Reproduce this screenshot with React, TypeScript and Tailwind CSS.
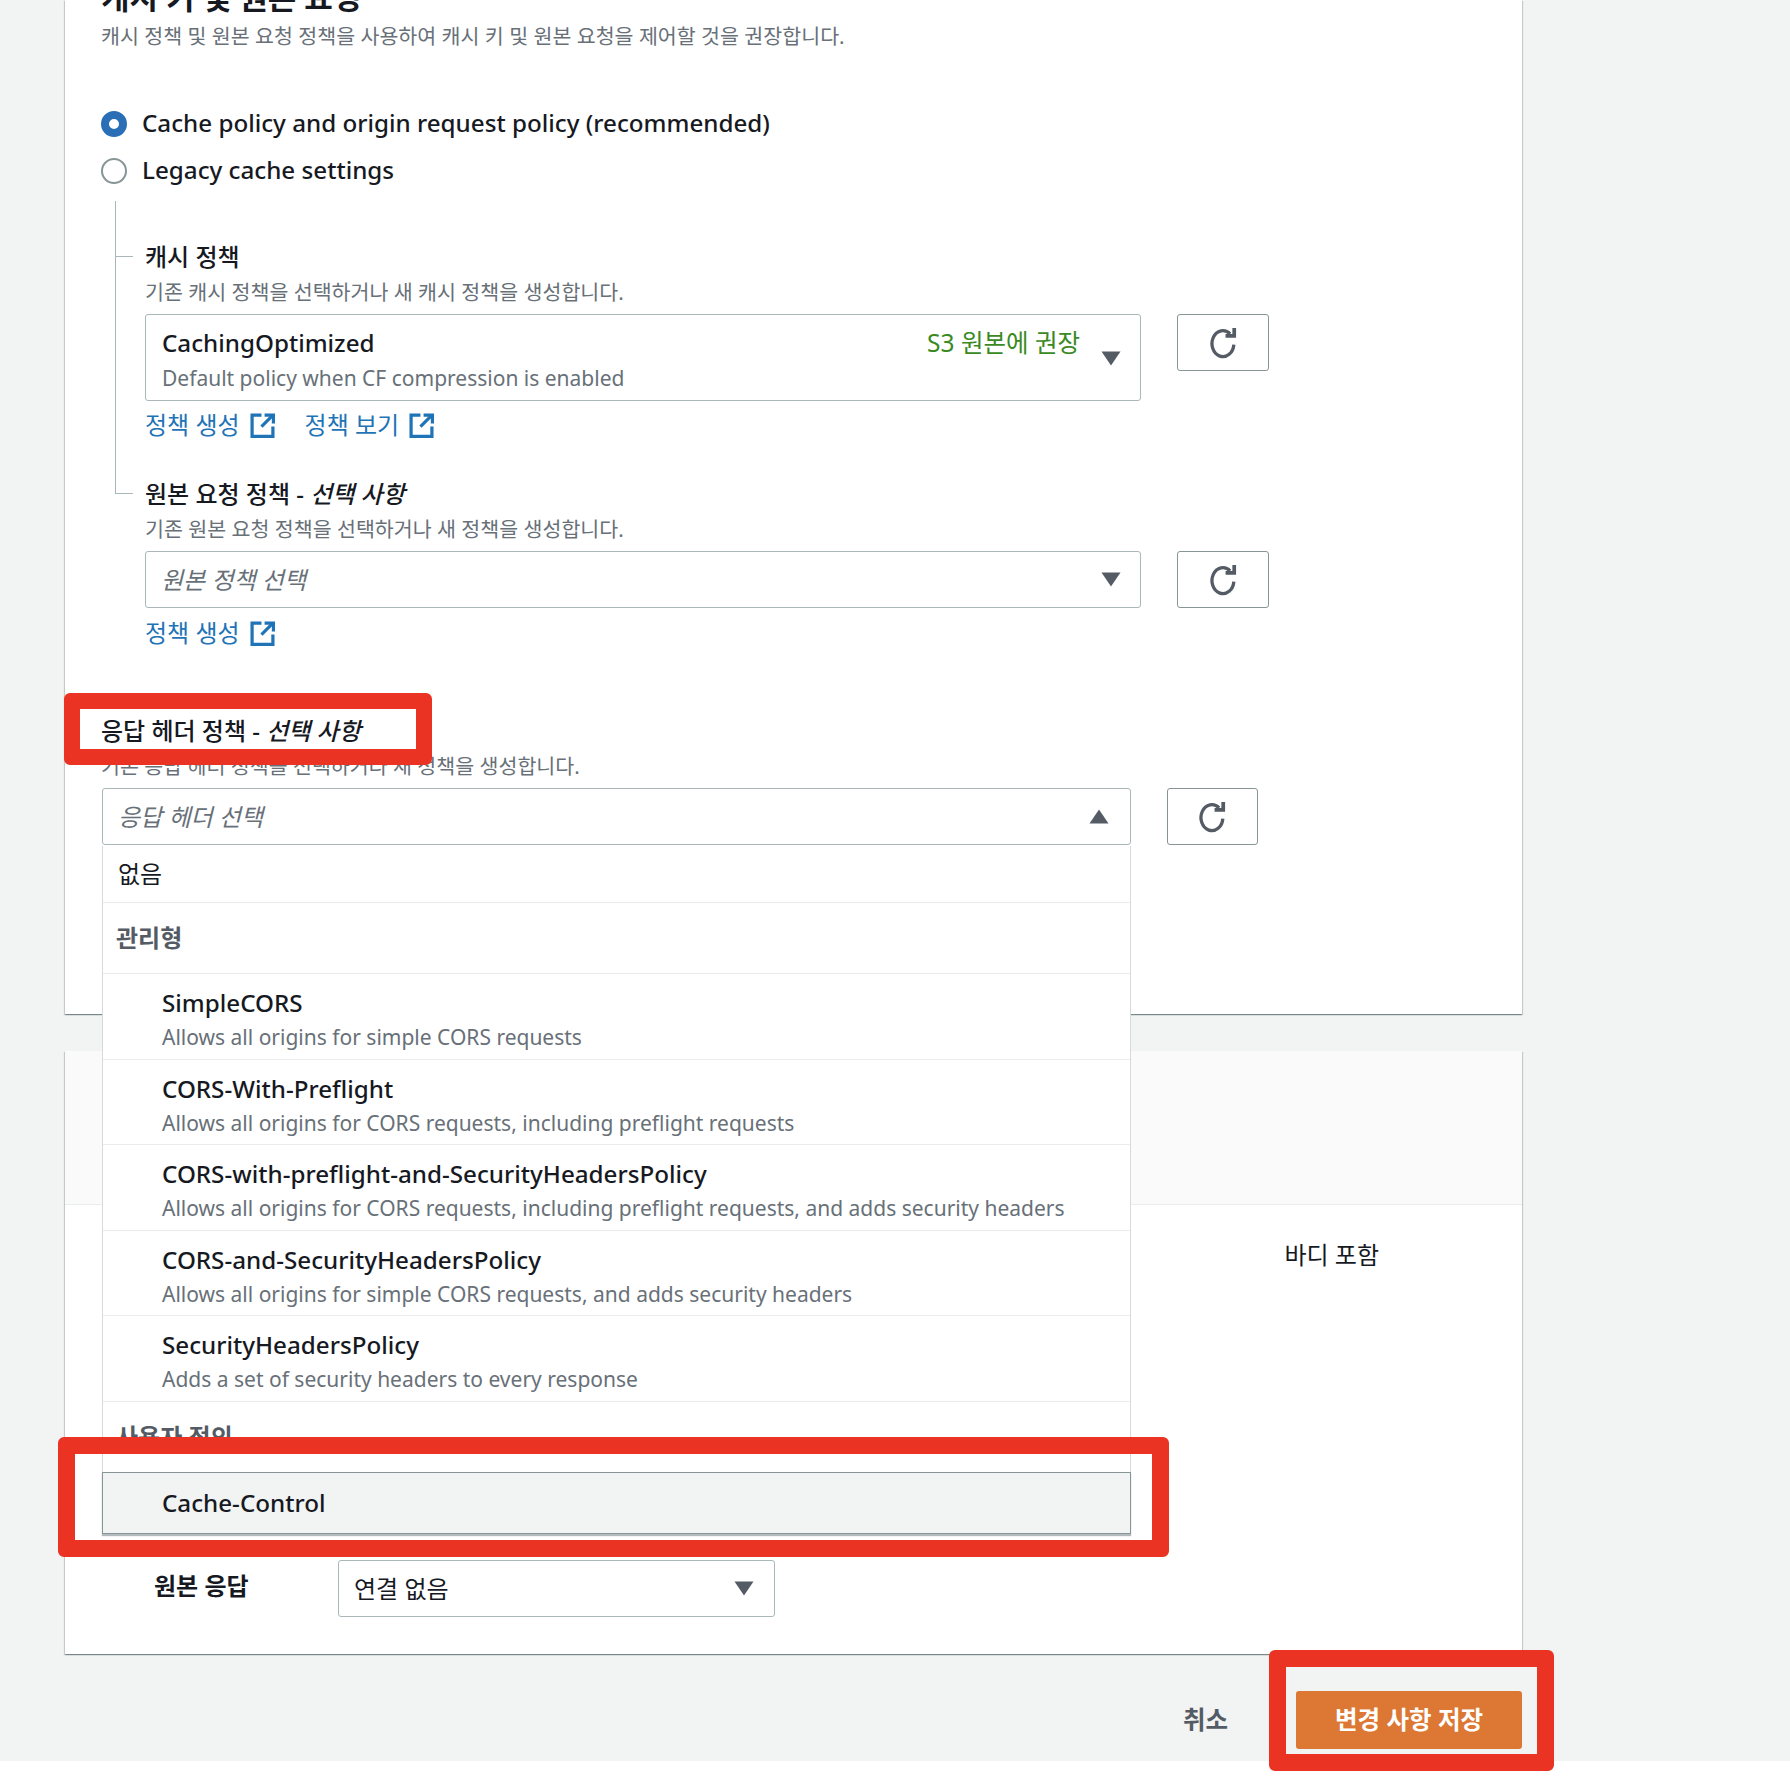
import React from "react";

const FONT = "font-['Noto_Sans','Noto_Sans_CJK_KR',sans-serif]";

const RefreshIcon = () => (
  <svg viewBox="0 0 16 16" className="h-[33px] w-[33px]" fill="none" stroke="#545b64" strokeWidth="1.6">
    <path d="M13 9a5.3 6.3 0 1 1-1.8-5.2" />
    <path d="M13.2 1v3.8H9" strokeWidth="1.8" />
  </svg>
);

const ExternalIcon = () => (
  <svg viewBox="0 0 24 24" className="h-[25px] w-[25px] shrink-0" fill="none" stroke="#1f73b7" strokeWidth="3.1">
    <path d="M22 13v9.5H2V2h9" />
    <path d="M14 2h8.5v8" />
    <path d="M22 2 11 13" />
  </svg>
);

const Caret = ({ up = false }: { up?: boolean }) => (
  <svg viewBox="0 0 20 15" className="h-[15px] w-[20px] shrink-0" fill="#545b64">
    {up ? <path d="M10 0.5 19.5 14.5H0.5Z" /> : <path d="M0.5 0.5H19.5L10 14.5Z" />}
  </svg>
);

const RefreshButton = ({ w = "w-[91px]" }: { w?: string }) => (
  <button className={`flex h-[57px] ${w} shrink-0 items-center justify-center rounded-[3px] border border-[#879596] bg-white`}>
    <RefreshIcon />
  </button>
);

const PolicyLink = ({ label }: { label: string }) => (
  <a className="flex items-center gap-[10px] text-[24px] leading-[32px] text-[#1f73b7]">
    {label}
    <ExternalIcon />
  </a>
);

const Description = ({ children }: { children: React.ReactNode }) => (
  <p className="h-[28px] text-[20.6px] leading-[28px] text-[#687078]">{children}</p>
);

const Label = ({ children }: { children: React.ReactNode }) => (
  <p className="h-[32px] text-[24px] font-medium leading-[32px] text-[#16191f]">{children}</p>
);

const managed = [
  ["SimpleCORS", "Allows all origins for simple CORS requests"],
  ["CORS-With-Preflight", "Allows all origins for CORS requests, including preflight requests"],
  ["CORS-with-preflight-and-SecurityHeadersPolicy", "Allows all origins for CORS requests, including preflight requests, and adds security headers"],
  ["CORS-and-SecurityHeadersPolicy", "Allows all origins for simple CORS requests, and adds security headers"],
  ["SecurityHeadersPolicy", "Adds a set of security headers to every response"],
];

const Dropdown = () => (
  <div className="absolute left-0 top-[58px] z-10 w-[1029px] border-x border-[#d5dbdb] bg-white">
    <div className="flex h-[57px] items-center border-b border-[#eaeded] pl-[15px] text-[24px] text-[#16191f]">없음</div>
    <div className="flex h-[71px] items-center border-b border-[#eaeded] pl-[13px] text-[24px] font-bold text-[#545b64]">관리형</div>
    {managed.map(([name, desc]) => (
      <div key={name} className="h-[85.6px] border-b border-[#eaeded] pl-[59px] pt-[13px]">
        <p className="text-[24.2px] font-medium leading-[32px] text-[#16191f]">{name}</p>
        <p className="mt-[2px] text-[21px] leading-[32px] text-[#687078]">{desc}</p>
      </div>
    ))}
    <div className="flex h-[70px] items-center pl-[13px] text-[24px] font-bold text-[#545b64]">사용자 정의</div>
    <div className="-mx-px flex h-[62px] items-center border border-[#879596] bg-[#f2f3f3] pl-[59px] text-[24.2px] font-medium text-[#16191f] shadow-[0_2px_1px_rgba(0,28,36,0.3)]">
      Cache-Control
    </div>
  </div>
);

export default function App() {
  return (
    <div className={`relative min-h-[1784px] overflow-hidden bg-white ${FONT}`}>
      <div className="h-[1761px] bg-[#f2f3f3] pl-[65px]">
        {/* cache key card */}
        <section className="flex h-[1014px] w-[1457px] flex-col bg-white pl-[36px] shadow-[0_1px_1px_rgba(0,28,36,0.3),1px_1px_1px_rgba(0,28,36,0.15),-1px_1px_1px_rgba(0,28,36,0.15)]">
          <h2 className="-mt-[23px] h-[40px] text-[31px] font-bold leading-[40px] text-[#16191f]">캐시 키 및 원본 요청</h2>
          <div className="mt-[5px]">
            <Description>캐시 정책 및 원본 요청 정책을 사용하여 캐시 키 및 원본 요청을 제어할 것을 권장합니다.</Description>
          </div>

          <div className="mt-[50px] flex flex-col">
            <label className="flex h-[47px] items-center gap-[15px] text-[24.2px] font-medium text-[#16191f]">
              <span className="h-[26px] w-[26px] rounded-full border-[8px] border-[#2a6fb5] bg-white" />
              <span className="-mt-px">Cache policy and origin request policy (recommended)</span>
            </label>
            <label className="flex h-[47px] items-center gap-[15px] text-[24.2px] font-medium text-[#16191f]">
              <span className="h-[26px] w-[26px] rounded-full border-2 border-[#879596] bg-white" />
              <span className="-mt-px">Legacy cache settings</span>
            </label>
          </div>

          {/* tree: cache policy + origin request policy */}
          <div className="relative mt-[7px] pl-[44px]">
            <div className="absolute left-[14px] top-0 h-[292px] w-px bg-[#aab7b8]" />
            <div className="absolute left-[14px] top-[55px] h-px w-[18px] bg-[#aab7b8]" />
            <div className="absolute left-[14px] top-[292px] h-px w-[18px] bg-[#aab7b8]" />

            <div className="pt-[40px]">
              <Label>캐시 정책</Label>
            </div>
            <div className="mt-[5px]">
              <Description>기존 캐시 정책을 선택하거나 새 캐시 정책을 생성합니다.</Description>
            </div>
            <div className="mt-[8px] flex items-start gap-[36px]">
              <div className="flex h-[87px] w-[996px] items-start justify-between rounded-[3px] border border-[#aab7b8] bg-white pl-[16px] pr-[19px]">
                <div>
                  <p className="mt-[12px] text-[24.2px] font-medium leading-[32px] text-[#16191f]">CachingOptimized</p>
                  <p className="mt-[5px] text-[21px] leading-[28px] text-[#687078]">Default policy when CF compression is enabled</p>
                </div>
                <div className="flex items-start gap-[21px]">
                  <span className="mt-[12px] text-[24.5px] leading-[32px] text-[#3a8a1f]">S3 원본에 권장</span>
                  <span className="mt-[36px]">
                    <Caret />
                  </span>
                </div>
              </div>
              <RefreshButton w="w-[92px]" />
            </div>
            <div className="mt-[8px] flex gap-[30px]">
              <PolicyLink label="정책 생성" />
              <PolicyLink label="정책 보기" />
            </div>

            <div className="mt-[37px]">
              <Label>
                원본 요청 정책 - <em className="italic">선택 사항</em>
              </Label>
            </div>
            <div className="mt-[5px]">
              <Description>기존 원본 요청 정책을 선택하거나 새 정책을 생성합니다.</Description>
            </div>
            <div className="mt-[8px] flex items-start gap-[36px]">
              <div className="flex h-[57px] w-[996px] items-center justify-between rounded-[3px] border border-[#aab7b8] bg-white pl-[15px] pr-[19px]">
                <em className="text-[24px] italic text-[#687078]">원본 정책 선택</em>
                <Caret />
              </div>
              <RefreshButton w="w-[92px]" />
            </div>
            <div className="mt-[9px]">
              <PolicyLink label="정책 생성" />
            </div>
          </div>

          <div className="mt-[66px]">
            <Label>
              응답 헤더 정책 - <em className="italic">선택 사항</em>
            </Label>
          </div>
          <div className="mt-[5px]">
            <Description>기존 응답 헤더 정책을 선택하거나 새 정책을 생성합니다.</Description>
          </div>
          <div className="relative ml-px mt-[8px] flex items-start gap-[36px]">
            <div className="flex h-[57px] w-[1029px] items-center justify-between rounded-[3px] border border-[#aab7b8] bg-white pl-[15px] pr-[21px]">
              <em className="text-[24px] italic text-[#687078]">응답 헤더 선택</em>
              <Caret up />
            </div>
            <RefreshButton />
            <Dropdown />
          </div>
        </section>

        {/* behaviors card, mostly behind the open dropdown */}
        <section className="mt-[37px] h-[603px] w-[1457px] bg-white shadow-[0_1px_1px_rgba(0,28,36,0.3),1px_1px_1px_rgba(0,28,36,0.15),-1px_1px_1px_rgba(0,28,36,0.15)]">
          <div className="h-[154px] border-b border-[#eaeded] bg-[#fafafa]" />
          <div className="flex justify-end pr-[143px] pt-[34px]">
            <span className="text-[24px] leading-[32px] text-[#16191f]">바디 포함</span>
          </div>
          <div className="mt-[299px] flex items-start pl-[89px]">
            <span className="w-[184px] text-[24px] font-bold leading-[32px] text-[#16191f]">원본 응답</span>
            <div className="-mt-[10px] flex h-[57px] w-[437px] items-center justify-between rounded-[3px] border border-[#aab7b8] bg-white pl-[15px] pr-[20px]">
              <span className="text-[24px] text-[#16191f]">연결 없음</span>
              <Caret />
            </div>
          </div>
        </section>

        <div className="mt-[37px] flex w-[1457px] items-center justify-end gap-[68px]">
          <button className="text-[24.5px] font-bold text-[#545b64]">취소</button>
          <button className="h-[58px] w-[226px] rounded-[3px] bg-[#dc7833] text-[24.5px] font-bold text-white">변경 사항 저장</button>
        </div>
      </div>

      {/* red annotation boxes drawn over the screenshot */}
      <div className="absolute left-[64px] top-[693px] z-20 h-[72px] w-[368px] rounded-[6px] border-[16px] border-[#ea3323]" />
      <div className="absolute left-[58px] top-[1437px] z-20 h-[120px] w-[1111px] rounded-[6px] border-[17px] border-[#ea3323]" />
      <div className="absolute left-[1269px] top-[1650px] z-20 h-[121px] w-[285px] rounded-[6px] border-[17px] border-[#ea3323]" />
    </div>
  );
}
